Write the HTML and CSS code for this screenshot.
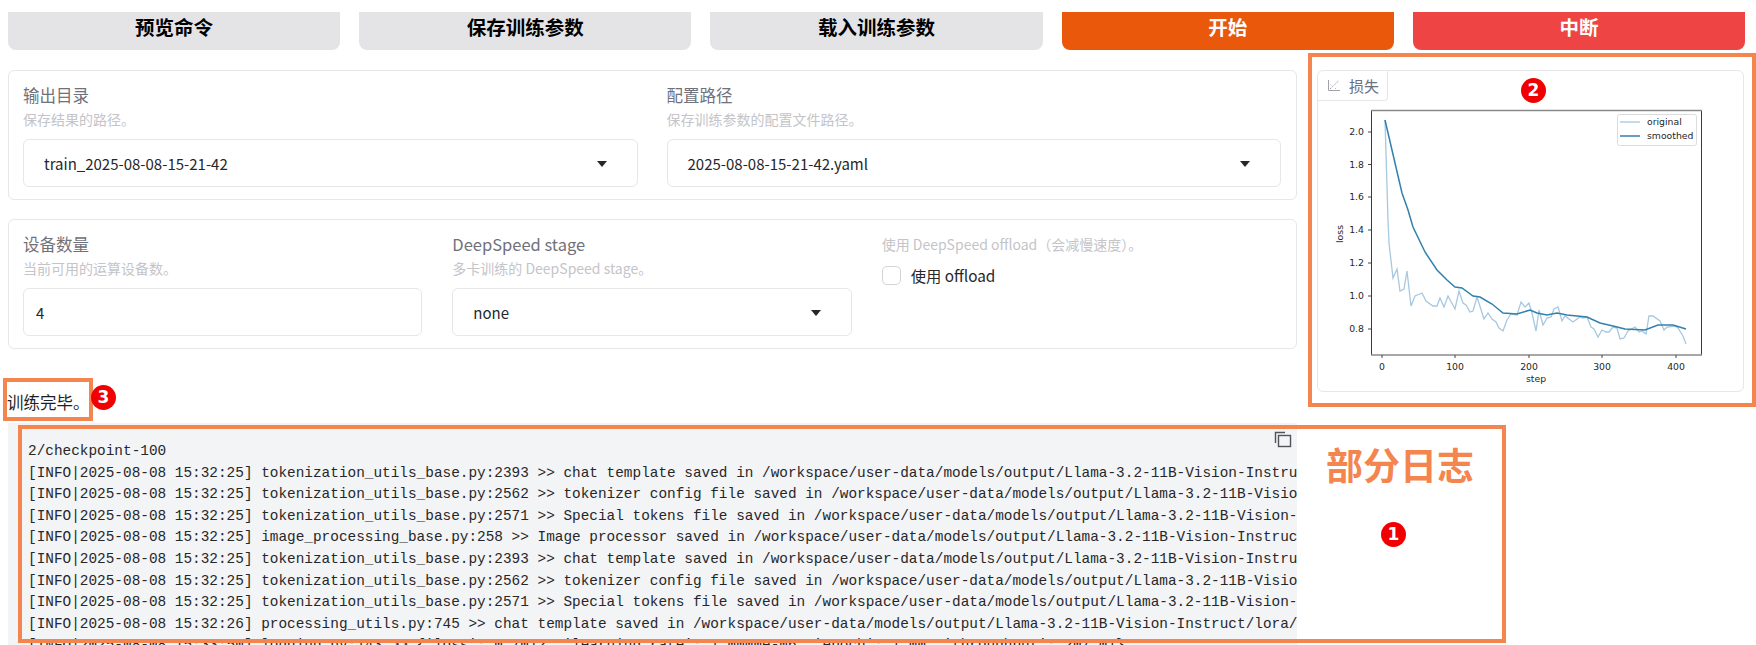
FILE: index.html
```html
<!DOCTYPE html>
<html lang="zh">
<head>
<meta charset="utf-8">
<title>训练</title>
<link rel="stylesheet" href="styles.css">
</head>
<body>
<div class="actions">
  <button class="btn">预览命令</button>
  <button class="btn">保存训练参数</button>
  <button class="btn">载入训练参数</button>
  <button class="btn btn-start">开始</button>
  <button class="btn btn-stop">中断</button>
</div>
<div class="main">
  <div class="left">
    <section class="group cols-2">
      <div class="field">
        <div class="label">输出目录</div>
        <div class="info">保存结果的路径。</div>
        <div class="input"><span>train_2025-08-08-15-21-42</span><i class="caret"></i></div>
      </div>
      <div class="field">
        <div class="label">配置路径</div>
        <div class="info">保存训练参数的配置文件路径。</div>
        <div class="input"><span>2025-08-08-15-21-42.yaml</span><i class="caret"></i></div>
      </div>
    </section>
    <section class="group cols-3">
      <div class="field">
        <div class="label">设备数量</div>
        <div class="info">当前可用的运算设备数。</div>
        <div class="input input-num"><span>4</span></div>
      </div>
      <div class="field">
        <div class="label">DeepSpeed stage</div>
        <div class="info">多卡训练的 DeepSpeed stage。</div>
        <div class="input"><span>none</span><i class="caret"></i></div>
      </div>
      <div class="field">
        <div class="info info-top">使用 DeepSpeed offload（会减慢速度）。</div>
        <label class="check"><i class="box"></i><span>使用 offload</span></label>
      </div>
    </section>
    <div class="status">训练完毕。</div>
    <div class="log">
      <svg class="copy" width="18" height="20" viewBox="0 0 18 20" fill="none" stroke="#52525b" stroke-width="1.4"><path d="M1.5 14V3.5H11"/><rect x="4.5" y="6.5" width="12" height="11"/></svg>
      <pre>2/checkpoint-100
[INFO|2025-08-08 15:32:25] tokenization_utils_base.py:2393 &gt;&gt; chat template saved in /workspace/user-data/models/output/Llama-3.2-11B-Vision-Instruct/lora/
[INFO|2025-08-08 15:32:25] tokenization_utils_base.py:2562 &gt;&gt; tokenizer config file saved in /workspace/user-data/models/output/Llama-3.2-11B-Vision-Instruct/
[INFO|2025-08-08 15:32:25] tokenization_utils_base.py:2571 &gt;&gt; Special tokens file saved in /workspace/user-data/models/output/Llama-3.2-11B-Vision-Instruct/
[INFO|2025-08-08 15:32:25] image_processing_base.py:258 &gt;&gt; Image processor saved in /workspace/user-data/models/output/Llama-3.2-11B-Vision-Instruct/lora/
[INFO|2025-08-08 15:32:25] tokenization_utils_base.py:2393 &gt;&gt; chat template saved in /workspace/user-data/models/output/Llama-3.2-11B-Vision-Instruct/lora/
[INFO|2025-08-08 15:32:25] tokenization_utils_base.py:2562 &gt;&gt; tokenizer config file saved in /workspace/user-data/models/output/Llama-3.2-11B-Vision-Instruct/
[INFO|2025-08-08 15:32:25] tokenization_utils_base.py:2571 &gt;&gt; Special tokens file saved in /workspace/user-data/models/output/Llama-3.2-11B-Vision-Instruct/
[INFO|2025-08-08 15:32:26] processing_utils.py:745 &gt;&gt; chat template saved in /workspace/user-data/models/output/Llama-3.2-11B-Vision-Instruct/lora/
[INFO|2025-08-08 15:33:50] logging.py:143 &gt;&gt; {'loss': 0.7012, 'learning_rate': 1.0000e-06, 'epoch': 1.00, 'throughput': 207.01}</pre>
    </div>
  </div>
  <aside class="plot-card">
    <div class="plot-tab">
      <svg class="plot-icon" width="14" height="13" viewBox="0 0 14 13" fill="none" stroke="#a1a1aa" stroke-width="1"><path d="M1.5 1v10.5H13"/><path d="M3 10l9-8.5" stroke-dasharray="1.8 1.2"/><path d="M3.5 5.5l1.5 1.5M8 10l1.5-1.5" stroke-dasharray="1 1"/></svg>
      <span>损失</span>
    </div>
    <svg class="chart" width="425" height="290" viewBox="1318 100 425 290">
      <polyline class="line-orig" points="1385,120 1388,220 1389,243 1393,278 1397,269 1400,291 1404,289 1407,271 1411,306 1415,296 1422,293 1426,301 1433,306 1437,306 1440,298 1444,307 1448,296 1455,309 1459,291 1463,303 1466,305 1470,312 1473,311 1477,297 1484,319 1488,313 1492,319 1496,322 1499,328 1503,331 1507,320 1511,314 1517,315 1521,302 1525,307 1529,303 1532,313 1536,331 1539,310 1543,325 1547,318 1551,317 1554,309 1558,307 1562,321 1565,316 1573,322 1580,317 1583,318 1587,317 1591,327 1594,329 1598,337 1602,330 1606,332 1609,332 1613,327 1617,328 1620,339 1624,338 1628,331 1635,327 1639,332 1642,331 1646,334 1649,316 1653,316 1660,321 1664,330 1667,327 1675,326 1678,328 1683,336 1686,344"/>
      <polyline class="line-smooth" points="1385,120 1395,163 1402,193 1408,210 1413,227 1425,252 1437,270 1447,280 1455,287 1462,288 1473,296 1480,297 1492,304 1503,313 1517,314 1530,310 1537,313 1547,315 1557,313 1567,315 1587,317 1600,323 1613,326 1625,329 1645,330 1658,325 1673,325 1686,329"/>
      <path class="axes-v" d="M1371.5 110v245M1701.5 110v245"/>
      <path class="axes-h" d="M1371 110.5h331M1371 355h331"/>
      <path class="ticks" d="M1368 132h3M1368 164.5h3M1368 197h3M1368 230h3M1368 263h3M1368 296h3M1368 329h3M1382 355v3M1455 355v3M1529 355v3M1602 355v3M1676 355v3"/>
      <g class="tick-y">
        <text x="1364" y="135">2.0</text><text x="1364" y="168">1.8</text><text x="1364" y="200">1.6</text><text x="1364" y="233">1.4</text><text x="1364" y="266">1.2</text><text x="1364" y="299">1.0</text><text x="1364" y="332">0.8</text>
      </g>
      <g class="tick-x">
        <text x="1382" y="370">0</text><text x="1455" y="370">100</text><text x="1529" y="370">200</text><text x="1602" y="370">300</text><text x="1676" y="370">400</text>
        <text x="1536" y="382">step</text>
      </g>
      <text class="axis-y" transform="translate(1343 234) rotate(-90)">loss</text>
      <rect class="legend" x="1617.5" y="114.5" width="79" height="31" rx="2"/>
      <path class="line-orig" d="M1620 122h20"/>
      <path class="line-smooth" d="M1620 136h20"/>
      <text class="legend-text" x="1647" y="125">original</text>
      <text class="legend-text" x="1647" y="139">smoothed</text>
    </svg>
  </aside>
</div>

<div class="mark mark-plot"></div>
<div class="mark mark-status"></div>
<div class="mark mark-log"></div>
<div class="note">部分日志</div>
<div class="badge badge-1">1</div>
<div class="badge badge-2">2</div>
<div class="badge badge-3">3</div>
</body>
</html>
```
FILE: styles.css
```css
* { box-sizing: border-box; }
html, body { margin: 0; height: 645px; overflow: hidden; background: #fff; }
body {
  position: relative;
  padding: 12px 11px 0 8px;
  font-family: "Noto Sans CJK SC", "Noto Sans", sans-serif;
  color: #27272a;
}
.actions { display: flex; gap: 19px; }
.btn {
  flex: 1;
  height: 38px;
  border: 0;
  border-radius: 0 0 8px 8px;
  background: #e4e4e7;
  color: #000;
  font: 700 19.5px "Noto Sans CJK SC", "Noto Sans", sans-serif;
  padding: 0 0 12px;
}
.btn-start { background: #ea580c; color: #fff; }
.btn-stop { background: #ef4444; color: #fff; }

.main { display: flex; gap: 20px; margin-top: 20px; }
.left { width: 1289px; flex: none; }
.group {
  display: grid;
  border: 1px solid #e5e7eb;
  border-radius: 6px;
  padding: 12px 15px 12px 14px;
  margin-bottom: 19px;
}
.cols-2 { grid-template-columns: 1fr 1fr; column-gap: 29px; }
.cols-3 { grid-template-columns: 1fr 1fr 1fr; column-gap: 30px; }
.label { font-size: 16.5px; line-height: 24px; color: #71717a; }
.info { font-size: 14px; line-height: 20px; margin-top: 2px; color: #c4c4c9; }
.info-top { margin-top: 2px; }
.input {
  display: flex;
  align-items: center;
  justify-content: space-between;
  height: 48px;
  margin-top: 10px;
  padding: 0 30px 0 20px;
  border: 1px solid #e5e7eb;
  border-radius: 6px;
  font-size: 15px;
  color: #27272a;
}
.input-num { padding-left: 12px; }
.caret { width: 0; height: 0; margin-top: 2px; border: 5.5px solid transparent; border-top: 6px solid #27272a; border-bottom: 0; }
.check { display: flex; align-items: center; gap: 10px; margin-top: 10px; font-size: 15.3px; color: #27272a; }
.box { width: 19px; height: 19px; border: 1px solid #d4d4d8; border-radius: 5px; }

.status { font-size: 16.5px; line-height: 24px; margin: 41px 0 9px -1px; color: #1f1f23; }
.log {
  position: relative;
  height: 240px;
  padding: 18px 0 0 20px;
  background: #f3f4f6;
  overflow: hidden;
}
.log pre {
  margin: 0;
  font: 14.4px/21.6px "Liberation Mono", monospace;
  color: #27272a;
}
.copy { position: absolute; top: 6px; right: 5px; }

.plot-card {
  width: 427px;
  height: 322px;
  flex: none;
  border: 1px solid #e5e7eb;
  border-radius: 6px;
  position: relative;
}
.plot-tab {
  display: flex;
  align-items: center;
  gap: 8px;
  width: 70px;
  height: 30px;
  padding-left: 9px;
  border-right: 1px solid #e5e7eb;
  border-bottom: 1px solid #e5e7eb;
  border-bottom-right-radius: 4px;
  font-size: 15px;
  color: #6b7280;
}
.chart { display: block; margin-top: -1px; }
.chart text { font-family: "DejaVu Sans", sans-serif; font-size: 9.3px; fill: #262626; }
.line-orig { fill: none; stroke: #a6c8e0; stroke-width: 1.3; }
.line-smooth { fill: none; stroke: #3280ad; stroke-width: 1.5; }
.axes-v { fill: none; stroke: #3a3a3a; stroke-width: 1; }
.axes-h { fill: none; stroke: #8a8a8a; stroke-width: 1.5; }
.ticks { stroke: #444; stroke-width: 1; fill: none; }
.tick-y text { text-anchor: end; }
.tick-x text { text-anchor: middle; }
.chart .axis-y { text-anchor: middle; }
.legend { fill: #fff; stroke: #dcdcdc; stroke-width: 1; }

.mark { position: absolute; border: 4px solid #f4854f; }
.mark-plot { left: 1308px; top: 53px; width: 448px; height: 354px; }
.mark-status { left: 3px; top: 378px; width: 90px; height: 43px; }
.mark-log { left: 18px; top: 425px; width: 1488px; height: 218px; }
.note {
  position: absolute;
  left: 1326px;
  top: 438px;
  font-size: 37px;
  line-height: 52px;
  font-weight: 700;
  color: #f4854f;
}
.badge {
  position: absolute;
  width: 25px;
  height: 25px;
  border-radius: 50%;
  background: #f00000;
  color: #fff;
  font: 700 17px/25px "DejaVu Sans", sans-serif;
  text-align: center;
}
.badge-1 { left: 1381px; top: 522px; }
.badge-2 { left: 1521px; top: 78px; }
.badge-3 { left: 91px; top: 385px; }
```
